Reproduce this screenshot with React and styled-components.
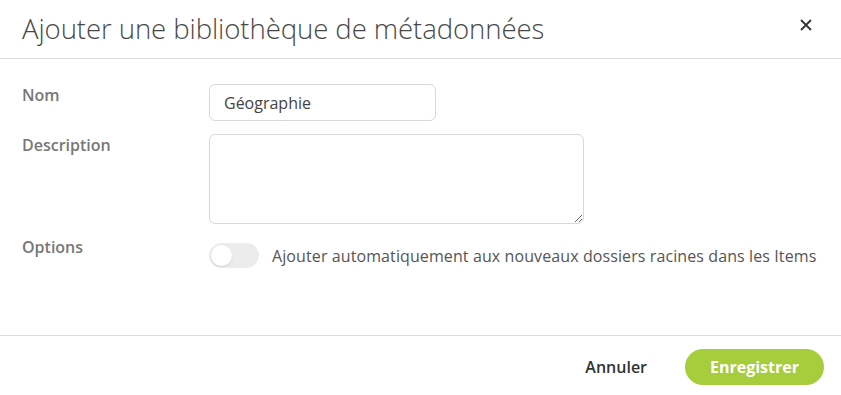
import React from 'react';
import styled, { createGlobalStyle } from 'styled-components';

const GlobalStyle = createGlobalStyle`
  html, body {
    margin: 0;
    padding: 0;
    background: #fff;
    font-family: 'Open Sans', 'Liberation Sans', sans-serif;
  }
`;

// Modal frame
const Modal = styled.div`
  width: 841px;
  height: 395px;
  display: flex;
  flex-direction: column;
  background: #fff;
`;

const Header = styled.div`
  height: 58px;
  display: flex;
  align-items: center;
  justify-content: space-between;
  padding: 0 29px 0 22px;
  border-bottom: 1px solid #dcdcdc;
`;

const Title = styled.h2`
  margin: 0 0 3px;
  font-family: 'Open Sans Light', 'Open Sans', sans-serif;
  font-size: 27.6px;
  font-weight: 300;
  color: #484848;
  letter-spacing: -0.1px;
`;

const CloseButton = styled.button`
  border: none;
  background: none;
  padding: 0;
  display: flex;
  cursor: pointer;
  margin-top: -8px;
`;

const Body = styled.div`
  flex: 1;
  padding: 25px 22px 0;
  display: flex;
  flex-direction: column;
  gap: 13px;
`;

const Row = styled.div`
  display: grid;
  grid-template-columns: 187px 1fr;
  align-items: start;
`;

const Label = styled.label`
  font-size: 16px;
  font-weight: 600;
  color: #777;
  line-height: 20px;
  padding-top: ${p => p.offset || 0}px;
`;

const TextInput = styled.input`
  box-sizing: border-box;
  width: 227px;
  height: 37px;
  border: 1px solid #d9d9d9;
  border-radius: 6px;
  padding: 0 14px;
  font-family: inherit;
  font-size: 16px;
  color: #444;
  outline: none;
`;

const TextArea = styled.textarea`
  box-sizing: border-box;
  width: 375px;
  height: 90px;
  border: 1px solid #d9d9d9;
  border-radius: 6px;
  padding: 8px 14px;
  font-family: inherit;
  font-size: 16px;
  color: #444;
  outline: none;
  resize: both;
  display: block;
`;

const OptionLine = styled.div`
  display: flex;
  align-items: center;
  gap: 13px;
  margin-top: 6px;
`;

const Toggle = styled.span`
  position: relative;
  width: 50px;
  height: 25px;
  border-radius: 13px;
  background: #ececec;
  flex-shrink: 0;

  &::after {
    content: '';
    position: absolute;
    top: 2px;
    left: 2px;
    width: 21px;
    height: 21px;
    border-radius: 50%;
    background: #fff;
    box-shadow: 0 1px 2px rgba(0, 0, 0, 0.12);
  }
`;

const OptionText = styled.span`
  font-size: 16px;
  color: #555;
  letter-spacing: 0.1px;
`;

const Footer = styled.div`
  height: 60px;
  box-sizing: border-box;
  padding: 3px 17px 0;
  border-top: 1px solid #dcdcdc;
  display: flex;
  align-items: center;
  justify-content: flex-end;
  gap: 26px;
`;

const CancelButton = styled.button`
  border: none;
  background: none;
  font-family: inherit;
  font-size: 16px;
  font-weight: 600;
  color: #333;
  padding: 0 12px;
  cursor: pointer;
`;

const SaveButton = styled.button`
  width: 139px;
  height: 36px;
  border: none;
  border-radius: 18px;
  background: #a6cd3b;
  color: #fff;
  font-family: inherit;
  font-size: 16px;
  font-weight: 700;
  cursor: pointer;
`;

const App = () => (
  <>
    <GlobalStyle />
    <Modal>
      <Header>
        <Title>Ajouter une bibliothèque de métadonnées</Title>
        <CloseButton aria-label="Fermer">
          <svg width="12" height="12" viewBox="0 0 12 12">
            <path d="M1 1 L11 11 M11 1 L1 11" stroke="#333" strokeWidth="1.8" />
          </svg>
        </CloseButton>
      </Header>
      <Body>
        <Row>
          <Label offset={1}>Nom</Label>
          <TextInput defaultValue="Géographie" />
        </Row>
        <Row>
          <Label offset={1}>Description</Label>
          <TextArea />
        </Row>
        <Row>
          <Label>Options</Label>
          <OptionLine>
            <Toggle />
            <OptionText>Ajouter automatiquement aux nouveaux dossiers racines dans les Items</OptionText>
          </OptionLine>
        </Row>
      </Body>
      <Footer>
        <CancelButton>Annuler</CancelButton>
        <SaveButton>Enregistrer</SaveButton>
      </Footer>
    </Modal>
  </>
);

export default App;
